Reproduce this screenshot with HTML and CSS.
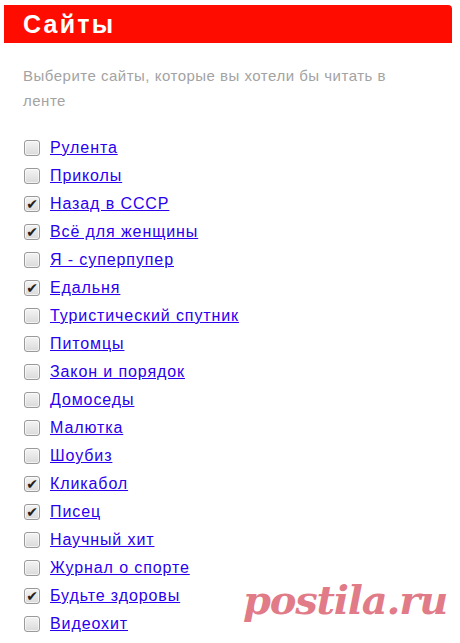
FILE: index.html
```html
<!DOCTYPE html>
<html lang="ru">
<head>
<meta charset="utf-8">
<title>Сайты</title>
<link rel="stylesheet" href="styles.css">
</head>
<body>
<div class="panel">
  <h1 class="title">Сайты</h1>
  <p class="hint">Выберите сайты, которые вы хотели бы читать в ленте</p>
  <ul class="sites">
    <li class="site"><span class="box"></span><a href="#">Рулента</a></li>
    <li class="site"><span class="box"></span><a href="#">Приколы</a></li>
    <li class="site"><span class="box checked"></span><a href="#">Назад в СССР</a></li>
    <li class="site"><span class="box checked"></span><a href="#">Всё для женщины</a></li>
    <li class="site"><span class="box"></span><a href="#">Я - суперпупер</a></li>
    <li class="site"><span class="box checked"></span><a href="#">Едальня</a></li>
    <li class="site"><span class="box"></span><a href="#">Туристический спутник</a></li>
    <li class="site"><span class="box"></span><a href="#">Питомцы</a></li>
    <li class="site"><span class="box"></span><a href="#">Закон и порядок</a></li>
    <li class="site"><span class="box"></span><a href="#">Домоседы</a></li>
    <li class="site"><span class="box"></span><a href="#">Малютка</a></li>
    <li class="site"><span class="box"></span><a href="#">Шоубиз</a></li>
    <li class="site"><span class="box checked"></span><a href="#">Кликабол</a></li>
    <li class="site"><span class="box checked"></span><a href="#">Писец</a></li>
    <li class="site"><span class="box"></span><a href="#">Научный хит</a></li>
    <li class="site"><span class="box"></span><a href="#">Журнал о спорте</a></li>
    <li class="site"><span class="box checked"></span><a href="#">Будьте здоровы</a></li>
    <li class="site"><span class="box"></span><a href="#">Видеохит</a></li>
  </ul>
  <div class="watermark">postila.ru</div>
</div>
</body>
</html>
```

FILE: styles.css
```css
html, body {
  margin: 0;
  padding: 0;
  background: #ffffff;
}

body {
  font-family: "Liberation Sans", Arial, sans-serif;
  width: 460px;
  height: 643px;
  overflow: hidden;
}

.panel {
  position: relative;
  padding: 5px 8px 0 4px;
  height: 638px;
}

.title {
  margin: 0;
  height: 38px;
  line-height: 38px;
  padding-left: 19px;
  background: #ff0c00;
  color: #ffffff;
  font-size: 25px;
  font-weight: bold;
  letter-spacing: 2.2px;
  border-radius: 0 4px 0 0;
}

.hint {
  margin: 20px 0 0 19px;
  max-width: 380px;
  color: #a3a3a3;
  font-size: 15px;
  line-height: 25px;
  letter-spacing: 0.5px;
}

.sites {
  list-style: none;
  margin: 21px 0 0 20px;
  padding: 0;
}

.site {
  display: flex;
  align-items: center;
  height: 28px;
  gap: 10px;
}

.box {
  width: 14px;
  height: 14px;
  border: 1px solid #9a9a9a;
  border-radius: 3px;
  background: linear-gradient(#f4f4f4, #dadada);
  box-shadow: inset 0 0 0 1px rgba(255,255,255,0.6);
  display: flex;
  align-items: center;
  justify-content: center;
  font-size: 14px;
  color: #1e1e1e;
  line-height: 1;
}

.box.checked::after {
  content: "\2714";
  font-family: "DejaVu Sans", sans-serif;
}

.site a {
  color: #2a00ee;
  font-size: 16px;
  letter-spacing: 0.9px;
  text-decoration: underline;
}

.watermark {
  position: absolute;
  left: 243px;
  top: 580px;
  font-family: "DejaVu Serif", serif;
  font-style: italic;
  font-weight: bold;
  font-size: 40px;
  line-height: 1;
  letter-spacing: -1.2px;
  color: rgba(214, 80, 95, 0.75);
}
```
